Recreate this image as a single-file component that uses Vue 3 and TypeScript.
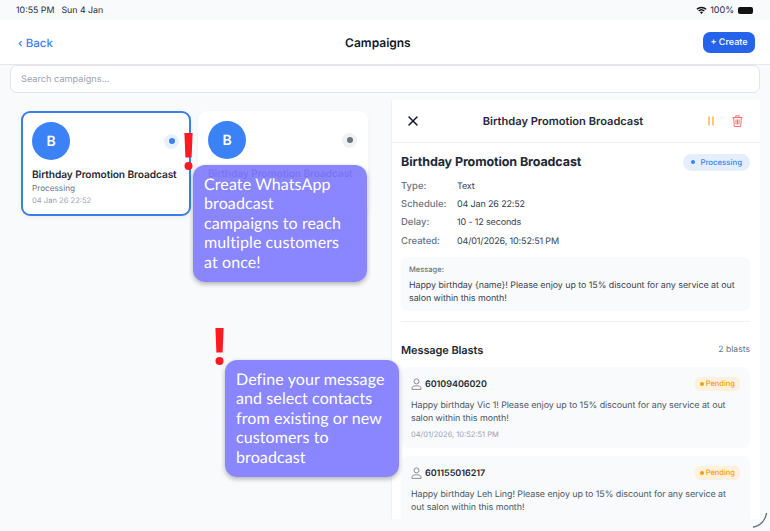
<script setup lang="ts">
const campaigns = [
  { id: 1, date: '04 Jan 26 22:52', active: true },
  { id: 2, date: '04 Jan 26 22:50', active: false }
]

const details = [
  { label: 'Type:', value: 'Text' },
  { label: 'Schedule:', value: '04 Jan 26 22:52' },
  { label: 'Delay:', value: '10 - 12 seconds' },
  { label: 'Created:', value: '04/01/2026, 10:52:51 PM' }
]

const blasts = [
  {
    phone: '60109406020',
    text: 'Happy birthday Vic 1! Please enjoy up to 15% discount for any service at out salon within this month!',
    time: '04/01/2026, 10:52:51 PM'
  },
  {
    phone: '601155016217',
    text: 'Happy birthday Leh Ling! Please enjoy up to 15% discount for any service at out salon within this month!',
    time: '04/01/2026, 10:52:51 PM'
  }
]
</script>

<template>
  <div class="app">
    <div class="status">
      <span class="status__time"><span>10:55 PM</span><span>Sun 4 Jan</span></span>
      <span class="status__right">
        <svg width="11" height="8" viewBox="0 0 11 8">
          <path d="M0.4 2.7A7.4 7.4 0 0 1 10.6 2.7L9.6 3.8A6 6 0 0 0 1.4 3.8Z" fill="#111" />
          <path d="M2.2 4.5A4.8 4.8 0 0 1 8.8 4.5L7.8 5.5A3.4 3.4 0 0 0 3.2 5.5Z" fill="#111" />
          <path d="M4 6.3A2.2 2.2 0 0 1 7 6.3L5.5 7.9Z" fill="#111" />
        </svg>
        <span>100%</span>
        <span class="battery"></span>
      </span>
    </div>

    <header class="nav">
      <span class="nav__back">‹ Back</span>
      <span class="nav__title">Campaigns</span>
      <button type="button" class="nav__create">+ Create</button>
    </header>

    <div class="search">Search campaigns...</div>

    <main class="main">
      <section class="list">
        <article v-for="c in campaigns" :key="c.id" class="card" :class="{ 'card--active': c.active }">
          <div class="card__top">
            <div class="avatar">B</div>
            <span class="state"><i></i></span>
          </div>
          <div class="card__title">Birthday Promotion Broadcast</div>
          <div class="card__status">Processing</div>
          <div class="card__date">{{ c.date }}</div>
        </article>
      </section>

      <section class="detail">
        <div class="detail__bar">
          <svg width="12" height="12" viewBox="0 0 12 12">
            <path d="M2 2L10 10M10 2L2 10" stroke="#111827" stroke-width="1.5" stroke-linecap="round" />
          </svg>
          <span class="detail__bar-title">Birthday Promotion Broadcast</span>
          <span class="detail__actions">
            <svg width="8" height="10" viewBox="0 0 8 10">
              <path d="M2 0.5V9.5M6 0.5V9.5" stroke="#f5a524" stroke-width="1.2" />
            </svg>
            <svg width="11" height="12" viewBox="0 0 11 12" fill="none" stroke="#f87171" stroke-width="1">
              <path d="M0.5 2.5H10.5M3.8 2.5V0.8H7.2V2.5M1.6 2.5L2.3 11.5H8.7L9.4 2.5M4 4.5V9.5M5.5 4.5V9.5M7 4.5V9.5" />
            </svg>
          </span>
        </div>

        <div class="detail__body">
          <div class="head">
            <h2>Birthday Promotion Broadcast</h2>
            <span class="badge badge--blue"><i></i>Processing</span>
          </div>

          <div v-for="d in details" :key="d.label" class="row">
            <span class="row__label">{{ d.label }}</span>
            <span class="row__value">{{ d.value }}</span>
          </div>

          <div class="message">
            <div class="message__label">Message:</div>
            <div class="message__text">Happy birthday {name}! Please enjoy up to 15% discount for any service at out salon within this month!</div>
          </div>

          <hr class="divider" />

          <div class="blasts-head">
            <h3>Message Blasts</h3>
            <span>2 blasts</span>
          </div>

          <div v-for="b in blasts" :key="b.phone" class="blast">
            <div class="blast__top">
              <svg width="11" height="12" viewBox="0 0 11 12" fill="none" stroke="#6b7280" stroke-width="0.8">
                <circle cx="5.5" cy="3.4" r="2.5" />
                <path d="M1 11.4V10.2C1 8.6 2.6 7.8 5.5 7.8S10 8.6 10 10.2V11.4Z" />
              </svg>
              <span class="blast__phone">{{ b.phone }}</span>
              <span class="badge badge--amber"><i></i>Pending</span>
            </div>
            <div class="blast__text">{{ b.text }}</div>
            <div class="blast__time">{{ b.time }}</div>
          </div>
        </div>
      </section>
    </main>

    <div class="tip tip--one">Create WhatsApp<br />broadcast<br />campaigns to reach<br />multiple customers<br />at once!</div>
    <div class="tip tip--two">Define your message<br />and select contacts<br />from existing or new<br />customers to<br />broadcast</div>

    <svg class="mark mark--one" width="9" height="38" viewBox="0 0 9 38">
      <path d="M0.4 0H8.6L7.6 24.5H1.4Z" fill="#ff1a22" />
      <circle cx="4.5" cy="33" r="4" fill="#ff1a22" />
    </svg>
    <svg class="mark mark--two" width="9" height="38" viewBox="0 0 9 38">
      <path d="M0.4 0H8.6L7.6 24.5H1.4Z" fill="#ff1a22" />
      <circle cx="4.5" cy="33" r="4" fill="#ff1a22" />
    </svg>

    <svg class="grip" width="16" height="16" viewBox="0 0 16 16" fill="none">
      <path d="M14.5 1.5C13.5 8 8.5 14 1.5 15" stroke="#6b7280" stroke-width="1.5" stroke-linecap="round" />
    </svg>
  </div>
</template>

<style>
html,
body {
  margin: 0;
  background: #f9fafb;
}
</style>

<style scoped>
.app {
  position: relative;
  width: 770px;
  height: 531px;
  overflow: hidden;
  display: flex;
  flex-direction: column;
  background: #f9fafb;
  font-family: Inter, 'Liberation Sans', sans-serif;
  color: #111827;
  text-rendering: geometricPrecision;
}

.status {
  height: 20px;
  flex: none;
  display: flex;
  align-items: center;
  justify-content: space-between;
  padding: 0 17px 0 16px;
  font-size: 8.8px;
  color: #1f2937;
}

.status__time {
  display: flex;
  gap: 7px;
}

.status__right {
  display: flex;
  align-items: center;
  gap: 3px;
  font-size: 9px;
}

.battery {
  display: block;
  width: 15px;
  height: 7px;
  margin-left: 1px;
  background: #111;
  border-radius: 2px;
}

.nav {
  height: 45px;
  flex: none;
  display: flex;
  align-items: center;
  justify-content: space-between;
  padding: 1px 15px 0 18px;
  background: #fff;
  border-bottom: 1px solid #e5e7eb;
  box-sizing: border-box;
}

.nav__back {
  font-size: 11.5px;
  font-weight: 500;
  color: #3b82f6;
}

.nav__title {
  font-size: 12px;
  font-weight: 600;
}

.nav__create {
  width: 52px;
  height: 21px;
  padding: 0;
  border: 0;
  border-radius: 7px;
  background: #2563eb;
  color: #fff;
  font: 500 9px Inter, sans-serif;
  text-rendering: geometricPrecision;
}

.search {
  flex: none;
  height: 28px;
  margin: 0 10px;
  padding-left: 10px;
  display: flex;
  align-items: center;
  box-sizing: border-box;
  background: #fff;
  border: 1px solid #e2e4ea;
  border-radius: 7px;
  font-size: 9.2px;
  color: #9ca3af;
}

.main {
  flex: 1;
  min-height: 0;
  display: flex;
  padding: 7px 10px 12px 21px;
}

.list {
  width: 370px;
  flex: none;
  display: flex;
  align-items: flex-start;
  gap: 7px;
  padding-top: 11px;
  box-sizing: border-box;
}

.card {
  width: 170px;
  height: 105px;
  flex: none;
  box-sizing: border-box;
  padding: 10px;
  background: #fff;
  border-radius: 9px;
  box-shadow: 0 2px 5px rgba(0, 0, 0, 0.05);
}

.card--active {
  padding: 9px;
  border: 2px solid #3b7dec;
}

.card__top {
  display: flex;
  align-items: center;
  justify-content: space-between;
  padding-right: 1px;
}

.avatar {
  width: 38px;
  height: 38px;
  display: flex;
  align-items: center;
  justify-content: center;
  border-radius: 50%;
  background: #3b82f6;
  color: #fff;
  font-size: 14px;
  font-weight: 600;
}

.state {
  width: 15px;
  height: 15px;
  display: flex;
  align-items: center;
  justify-content: center;
  border-radius: 50%;
  background: #e8f0fe;
}

.state i {
  width: 6px;
  height: 6px;
  border-radius: 50%;
  background: #3b82f6;
}

.card:not(.card--active) .state {
  background: #f0f1f3;
}

.card:not(.card--active) .state i {
  background: #6b7280;
}

.card__title {
  margin-top: 9px;
  font-size: 10.2px;
  font-weight: 600;
  letter-spacing: -0.1px;
  line-height: 13px;
  white-space: nowrap;
  color: #1f2937;
}

.card__status {
  margin-top: 1px;
  font-size: 8.2px;
  line-height: 11px;
  color: #6b7280;
}

.card__date {
  margin-top: 1px;
  font-size: 7.6px;
  line-height: 11px;
  color: #9ca3af;
}

.detail {
  width: 369px;
  flex: none;
  overflow: hidden;
  background: #fff;
  border-left: 1px solid #f0f1f3;
  box-sizing: border-box;
}

.detail__bar {
  height: 43px;
  display: flex;
  align-items: center;
  justify-content: space-between;
  padding: 0 17px 0 15px;
  box-sizing: border-box;
  border-bottom: 1px solid #f0f1f3;
}

.detail__bar-title {
  font-size: 11.1px;
  font-weight: 600;
  color: #1f2937;
}

.detail__actions {
  display: flex;
  align-items: center;
  gap: 17px;
}

.detail__body {
  padding: 10px 10px 0 9px;
}

.head {
  display: flex;
  align-items: center;
  justify-content: space-between;
  height: 18px;
  margin-bottom: 6px;
}

h2 {
  margin: 0;
  font-size: 12.5px;
  font-weight: 700;
  letter-spacing: -0.1px;
  color: #1f2937;
}

.badge {
  display: inline-flex;
  align-items: center;
  font-weight: 500;
}

.badge i {
  width: 4px;
  height: 4px;
  border-radius: 50%;
  background: currentColor;
}

.badge--blue {
  gap: 5px;
  height: 17px;
  padding: 0 8px;
  border-radius: 9px;
  background: #e5eefd;
  color: #3b82f6;
  font-size: 7.8px;
}

.badge--amber {
  gap: 2px;
  height: 14px;
  margin-left: auto;
  padding: 0 5px;
  border-radius: 5px;
  background: #fdf1de;
  color: #f59e0b;
  font-size: 7.5px;
}

.row {
  display: flex;
  align-items: center;
  height: 18.4px;
  font-size: 9px;
  letter-spacing: -0.15px;
}

.row__label {
  width: 56px;
  font-weight: 500;
  font-size: 9.5px;
  letter-spacing: 0;
  color: #6b7280;
}

.row__value {
  color: #374151;
}

.message {
  margin-top: 6px;
  height: 54px;
  box-sizing: border-box;
  padding: 7px 8px;
  border-radius: 6px;
  background: #f9fafb;
}

.message__label {
  font-size: 7.5px;
  font-weight: 500;
  line-height: 11px;
  color: #6b7280;
}

.message__text {
  margin-top: 4px;
  font-size: 8.9px;
  letter-spacing: -0.05px;
  line-height: 13px;
  color: #374151;
}

.divider {
  margin: 10px 0 0;
  border: 0;
  border-top: 1px solid #f0f1f3;
}

.blasts-head {
  display: flex;
  align-items: center;
  justify-content: space-between;
  height: 16px;
  margin: 20px 0 9px;
}

h3 {
  margin: 0;
  font-size: 11px;
  font-weight: 600;
  letter-spacing: -0.1px;
  color: #1f2937;
}

.blasts-head span {
  font-size: 8.6px;
  color: #6b7280;
}

.blast {
  height: 81px;
  margin-bottom: 8px;
  box-sizing: border-box;
  padding: 10px;
  border-radius: 8px;
  background: #f9fafb;
}

.blast__top {
  display: flex;
  align-items: center;
  gap: 3px;
  height: 14px;
}

.blast__phone {
  margin-top: 1px;
  font-size: 9px;
  font-weight: 600;
  letter-spacing: -0.05px;
  color: #1f2937;
}

.blast__text {
  margin-top: 8px;
  font-size: 8.9px;
  letter-spacing: -0.05px;
  line-height: 13px;
  color: #4b5563;
}

.blast__time {
  margin-top: 4px;
  font-size: 7.5px;
  line-height: 11px;
  color: #9ca3af;
}

.tip {
  position: absolute;
  width: 174px;
  height: 117px;
  box-sizing: border-box;
  padding: 10px 11px;
  border-radius: 12px;
  background: rgba(128, 124, 255, 0.92);
  box-shadow: 0 2px 5px rgba(0, 0, 0, 0.3);
  font-family: Lato, sans-serif;
  font-size: 16px;
  letter-spacing: 0.1px;
  line-height: 19.4px;
  color: #fff;
}

.tip--one {
  left: 193px;
  top: 165px;
}

.tip--two {
  left: 225px;
  top: 360px;
}

.mark {
  position: absolute;
}

.mark--one {
  left: 183.5px;
  top: 133px;
}

.mark--two {
  left: 215px;
  top: 328px;
}

.grip {
  position: absolute;
  right: 2px;
  bottom: 3px;
}
</style>
